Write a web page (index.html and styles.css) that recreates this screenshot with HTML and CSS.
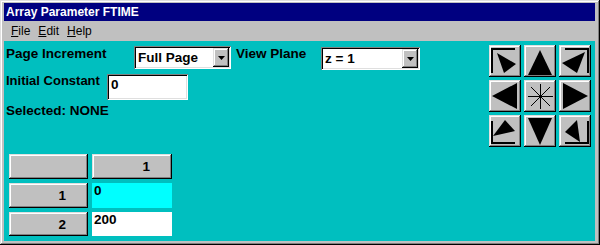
FILE: index.html
```html
<!doctype html>
<html lang="en">
    <head>
        <meta charset="UTF-8" />
        <title>Array Parameter FTIME</title>
        <link rel="stylesheet" href="styles.css">
    </head>
    <body>
        <div class="window">
            <div class="titlebar">Array Parameter FTIME</div>
            <div class="menubar">
                <span class="menu-item"><u>F</u>ile</span>
                <span class="menu-item"><u>E</u>dit</span>
                <span class="menu-item"><u>H</u>elp</span>
            </div>

            <div class="client">
                <div class="top">
                    <div class="form">
                        <div class="form-row">
                            <span class="label label-page">Page Increment</span>
                            <div class="combo combo-page">
                                <span class="combo-text">Full Page</span>
                                <span class="combo-btn"><svg width="7" height="4" viewBox="0 0 7 4"><polygon points="0,0 7,0 3.5,4" /></svg></span>
                            </div>
                            <span class="label label-view">View Plane</span>
                            <div class="combo combo-plane">
                                <span class="combo-text">z = 1</span>
                                <span class="combo-btn"><svg width="7" height="4" viewBox="0 0 7 4"><polygon points="0,0 7,0 3.5,4" /></svg></span>
                            </div>
                        </div>
                        <div class="form-row row-initial">
                            <span class="label label-initial">Initial Constant</span>
                            <div class="field">0</div>
                        </div>
                        <div class="label label-selected">Selected: NONE</div>
                    </div>

                    <div class="view-pad">
                        <button class="pad-btn">
                            <svg viewBox="0 0 32 32"><polyline class="bracket" points="3,28 3,4 26,4" /><polygon points="8,8 27,19 15,28" /></svg>
                        </button>
                        <button class="pad-btn">
                            <svg viewBox="0 0 32 32"><polygon points="4,30 16,5 28,30" /></svg>
                        </button>
                        <button class="pad-btn">
                            <svg viewBox="0 0 32 32"><polyline class="bracket" points="6,4 29,4 29,28" /><polygon points="3,18 26,7 18,28" /></svg>
                        </button>
                        <button class="pad-btn">
                            <svg viewBox="0 0 32 32"><polygon points="3,16 28,3 28,29" /></svg>
                        </button>
                        <button class="pad-btn">
                            <svg viewBox="0 0 32 32"><g class="star"><line x1="4" y1="16.5" x2="29" y2="16.5" /><line x1="16.5" y1="4" x2="16.5" y2="29" /><line x1="7" y1="7" x2="26" y2="26" /><line x1="26" y1="7" x2="7" y2="26" /></g></svg>
                        </button>
                        <button class="pad-btn">
                            <svg viewBox="0 0 32 32"><polygon points="4,3 29,16 4,29" /></svg>
                        </button>
                        <button class="pad-btn">
                            <svg viewBox="0 0 32 32"><polyline class="bracket" points="3,6 3,28 26,28" /><polygon points="4,21 16,5 26,16" /></svg>
                        </button>
                        <button class="pad-btn">
                            <svg viewBox="0 0 32 32"><polygon points="4,3 28,3 16,30" /></svg>
                        </button>
                        <button class="pad-btn">
                            <svg viewBox="0 0 32 32"><polyline class="bracket" points="29,6 29,28 6,28" /><polygon points="6,17 18,5 21,27" /></svg>
                        </button>
                    </div>
                </div>

                <div class="sheet">
                    <div class="sheet-btn"></div>
                    <div class="sheet-btn">1</div>
                    <div class="sheet-btn">1</div>
                    <div class="cell cell-selected">0</div>
                    <div class="sheet-btn">2</div>
                    <div class="cell">200</div>
                </div>
            </div>
        </div>
    </body>
</html>
```

FILE: styles.css
```css
body {
    margin: 0;
    font-family: "Liberation Sans", Arial, sans-serif;
}
.window {
    width: 600px;
    height: 245px;
    box-sizing: border-box;
    padding: 3px 5px 4px 4px;
    display: flex;
    flex-direction: column;
    background-color: #c0c0c0;
    box-shadow:
        inset -1px -1px #000,
        inset 1px 1px #dfdfdf,
        inset -2px -2px #808080,
        inset 2px 2px #fff;
}
.titlebar {
    height: 18px;
    line-height: 19px;
    padding-left: 2px;
    background-color: #000080;
    color: #fff;
    font-size: 12px;
    font-weight: bold;
    overflow: hidden;
}
.menubar {
    height: 20px;
    line-height: 20px;
    padding-left: 7px;
    display: flex;
    gap: 8px;
    font-size: 12px;
    color: #000;
}
.client {
    flex: 1;
    background-color: #00bfbf;
    padding: 4px 4px 0 2px;
}
.top {
    display: flex;
    justify-content: space-between;
}
.form {
    padding-top: 1px;
}
.form-row {
    display: flex;
    align-items: flex-start;
}
.label {
    font-size: 13.5px;
    font-weight: bold;
    line-height: 14px;
    color: #000;
}
.label-page {
    width: 128px;
    margin-top: 1px;
}
.label-view {
    width: 85px;
    margin-left: 5px;
    margin-top: 1px;
}
.combo {
    height: 23px;
    box-sizing: border-box;
    padding: 2px;
    display: flex;
    background-color: #fff;
    box-shadow:
        inset 1px 1px #808080,
        inset -1px -1px #fff,
        inset 2px 2px #000,
        inset -2px -2px #dfdfdf;
}
.combo-page {
    width: 97px;
}
.combo-plane {
    width: 99px;
    margin-top: 1px;
}
.combo-text {
    flex: 1;
    padding-left: 2px;
    font-size: 13.5px;
    font-weight: bold;
    line-height: 19px;
}
.combo-btn {
    width: 16px;
    display: flex;
    align-items: center;
    justify-content: center;
    background-color: #c0c0c0;
    box-shadow:
        inset -1px -1px #000,
        inset 1px 1px #dfdfdf,
        inset -2px -2px #808080,
        inset 2px 2px #fff;
}
.row-initial {
    margin-top: 4px;
}
.label-initial {
    width: 101px;
    font-size: 13px;
    line-height: 13px;
    white-space: nowrap;
}
.field {
    width: 81px;
    height: 26px;
    box-sizing: border-box;
    padding: 2px 0 0 4px;
    background-color: #fff;
    font-size: 13.5px;
    font-weight: bold;
    line-height: 17px;
    box-shadow:
        inset 1px 1px #808080,
        inset -1px -1px #fff,
        inset 2px 2px #000,
        inset -2px -2px #dfdfdf;
}
.label-selected {
    margin-top: 4px;
}
.view-pad {
    display: grid;
    grid-template-columns: repeat(3, 32px);
    grid-template-rows: repeat(3, 32px);
    gap: 3px;
}
.pad-btn {
    width: 32px;
    height: 32px;
    padding: 0;
    border: none;
    background-color: #c0c0c0;
    box-shadow:
        inset -1px -1px #000,
        inset 1px 1px #dfdfdf,
        inset -2px -2px #808080,
        inset 2px 2px #fff;
}
.pad-btn svg {
    display: block;
    width: 32px;
    height: 32px;
}
.pad-btn polygon {
    fill: #000;
}
.bracket {
    fill: none;
    stroke: #000;
    stroke-width: 2;
}
.star line {
    stroke: #000;
    stroke-width: 1;
}
.sheet {
    margin: 7px 0 0 3px;
    display: grid;
    grid-template-columns: 79px 80px;
    grid-template-rows: 25px 25px 24px;
    column-gap: 4px;
    row-gap: 4px;
}
.sheet-btn {
    padding-right: 22px;
    text-align: right;
    font-size: 13.5px;
    font-weight: bold;
    line-height: 25px;
    background-color: #c0c0c0;
    box-shadow:
        inset -1px -1px #000,
        inset 1px 1px #dfdfdf,
        inset -2px -2px #808080,
        inset 2px 2px #fff;
}
.cell {
    padding-left: 2px;
    background-color: #fff;
    font-size: 13.5px;
    font-weight: bold;
    line-height: 16px;
}
.cell-selected {
    background-color: #00ffff;
}
```
